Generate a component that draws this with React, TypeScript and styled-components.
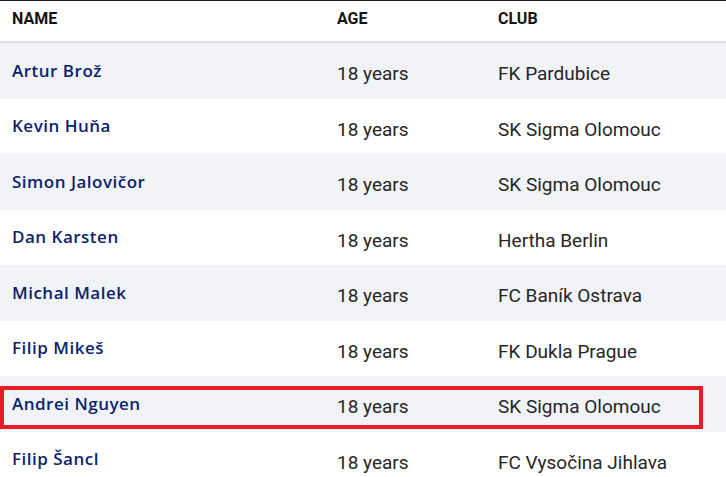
import styled, { createGlobalStyle } from 'styled-components';

const GlobalStyle = createGlobalStyle`
  html, body {
    margin: 0;
    padding: 0;
    background: #ffffff;
    overflow: hidden;
  }
`;

const players = [
  { name: 'Artur Brož', age: 18, club: 'FK Pardubice' },
  { name: 'Kevin Huňa', age: 18, club: 'SK Sigma Olomouc' },
  { name: 'Simon Jalovičor', age: 18, club: 'SK Sigma Olomouc' },
  { name: 'Dan Karsten', age: 18, club: 'Hertha Berlin' },
  { name: 'Michal Malek', age: 18, club: 'FC Baník Ostrava' },
  { name: 'Filip Mikeš', age: 18, club: 'FK Dukla Prague' },
  { name: 'Andrei Nguyen', age: 18, club: 'SK Sigma Olomouc', marked: true },
  { name: 'Filip Šancl', age: 18, club: 'FC Vysočina Jihlava' },
];

const Table = styled.div`
  width: 726px;
  border-top: 1px solid #1a1a1a;
`;

const HeaderRow = styled.div`
  display: grid;
  grid-template-columns: 337px 161px 1fr;
  align-items: center;
  height: 40px;
  border-bottom: 2px solid #dcdee4;
  box-sizing: content-box;
`;

const HeaderCell = styled.div<{ $first?: boolean }>`
  padding-left: ${(p) => (p.$first ? '12px' : '0')};
  padding-bottom: 5px;
  font-family: Roboto, 'Liberation Sans', sans-serif;
  font-weight: 700;
  font-size: 16px;
  color: #141414;
  text-transform: uppercase;
`;

const Row = styled.div<{ $striped: boolean }>`
  position: relative;
  display: grid;
  grid-template-columns: 337px 161px 1fr;
  align-items: center;
  height: 55.5px;
  background: ${(p) => (p.$striped ? '#f1f3f7' : '#ffffff')};
`;

const NameCell = styled.div`
  padding-left: 12px;
  padding-bottom: 1px;
  font-family: 'Open Sans', 'Noto Sans', sans-serif;
  font-weight: 600;
  font-size: 17px;
  letter-spacing: 0.5px;
  color: #0c1f6c;
  white-space: nowrap;
`;

const ValueCell = styled.div`
  padding-top: 6px;
  font-family: Roboto, 'Liberation Sans', sans-serif;
  font-weight: 400;
  font-size: 19px;
  color: #262626;
  white-space: nowrap;
`;

const Highlight = styled.div`
  position: absolute;
  left: 0;
  top: 10px;
  width: 703px;
  height: 43px;
  box-sizing: border-box;
  border: 4px solid #ea1c25;
  pointer-events: none;
`;

export default function App() {
  return (
    <>
      <GlobalStyle />
      <Table>
        <HeaderRow>
          <HeaderCell $first>Name</HeaderCell>
          <HeaderCell>Age</HeaderCell>
          <HeaderCell>Club</HeaderCell>
        </HeaderRow>
        {players.map((p, i) => (
          <Row key={p.name} $striped={i % 2 === 0}>
            <NameCell>{p.name}</NameCell>
            <ValueCell>{p.age} years</ValueCell>
            <ValueCell>{p.club}</ValueCell>
            {p.marked && <Highlight />}
          </Row>
        ))}
      </Table>
    </>
  );
}
